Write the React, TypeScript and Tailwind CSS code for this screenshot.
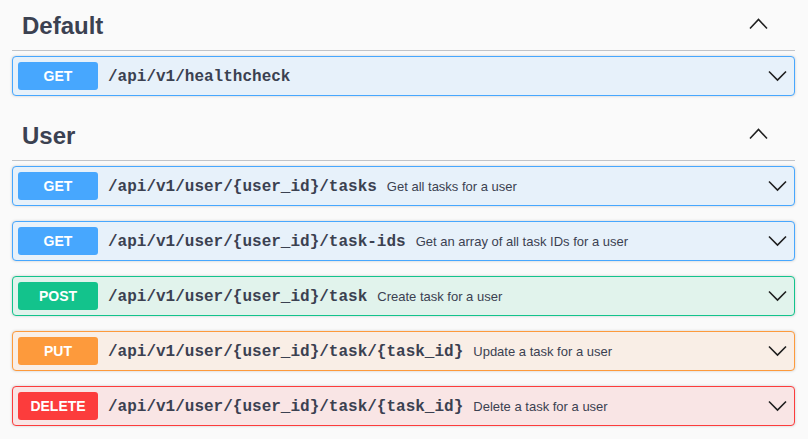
import React from "react";

type Op = {
  method: string;
  path: string;
  desc?: string;
  color: string;
  bg: string;
  border: string;
};

const sans = { fontFamily: '"Liberation Sans", Arial, sans-serif' };
const mono = { fontFamily: '"Liberation Mono", "Courier New", monospace' };

function ChevronUp() {
  return (
    <svg width="20" height="12" viewBox="0 0 20 12" className="block">
      <polyline points="1,10.5 9.5,1.5 18,10.5" fill="none" stroke="#1f1f1f" strokeWidth="1.6" />
    </svg>
  );
}

function ChevronDown() {
  return (
    <svg width="20" height="12" viewBox="0 0 20 12" className="block">
      <polyline points="1,1.5 9.5,10 18,1.5" fill="none" stroke="#1f1f1f" strokeWidth="1.6" />
    </svg>
  );
}

function OpBlock({ op }: { op: Op }) {
  return (
    <div
      className={`mb-[15px] flex h-[40px] items-center rounded-[4px] border p-[5px] shadow-[0_0_3px_rgba(0,0,0,0.19)] ${op.bg} ${op.border}`}
    >
      <div
        className={`flex h-[28px] w-[80px] shrink-0 items-center justify-center rounded-[3px] text-[14px] font-bold text-white ${op.color}`}
        style={sans}
      >
        {op.method}
      </div>
      <div className="flex flex-1 items-center pt-[1px]">
        <span className="px-[10px] text-[16px] font-bold text-[#3b4151]" style={mono}>
          {op.path}
        </span>
        {op.desc && (
          <span className="text-[13px] text-[#3b4151]" style={sans}>
            {op.desc}
          </span>
        )}
      </div>
      <div className="mr-[1px] flex h-[20px] items-center">
        <ChevronDown />
      </div>
    </div>
  );
}

function Section({ title, ops }: { title: string; ops: Op[] }) {
  return (
    <div>
      <div className="mb-[5px] flex h-[50px] items-center justify-between border-b border-[#c2c4c8] pl-[10px] pr-[26px]">
        <h4 className="text-[24px] font-bold text-[#3b4151]" style={sans}>
          {title}
        </h4>
        <div className="-mt-[3px]">
          <ChevronUp />
        </div>
      </div>
      {ops.map((op, i) => (
        <OpBlock key={i} op={op} />
      ))}
    </div>
  );
}

const GET = { color: "bg-[#47a7fe]", bg: "bg-[#e7f1fa]", border: "border-[#47a7fe]" };
const POST = { color: "bg-[#13c38c]", bg: "bg-[#e1f3ec]", border: "border-[#13c38c]" };
const PUT = { color: "bg-[#fd9a3c]", bg: "bg-[#f9eee6]", border: "border-[#fd9a3c]" };
const DEL = { color: "bg-[#fc3c3c]", bg: "bg-[#f9e5e5]", border: "border-[#fc3c3c]" };

export default function App() {
  return (
    <div className="min-h-[439px] w-[808px] bg-[#fafafa] pl-[12px] pr-[13px] pt-[1px]">
      <Section
        title="Default"
        ops={[{ method: "GET", path: "/api/v1/healthcheck", ...GET }]}
      />
      <Section
        title="User"
        ops={[
          { method: "GET", path: "/api/v1/user/{user_id}/tasks", desc: "Get all tasks for a user", ...GET },
          { method: "GET", path: "/api/v1/user/{user_id}/task-ids", desc: "Get an array of all task IDs for a user", ...GET },
          { method: "POST", path: "/api/v1/user/{user_id}/task", desc: "Create task for a user", ...POST },
          { method: "PUT", path: "/api/v1/user/{user_id}/task/{task_id}", desc: "Update a task for a user", ...PUT },
          { method: "DELETE", path: "/api/v1/user/{user_id}/task/{task_id}", desc: "Delete a task for a user", ...DEL },
        ]}
      />
    </div>
  );
}
